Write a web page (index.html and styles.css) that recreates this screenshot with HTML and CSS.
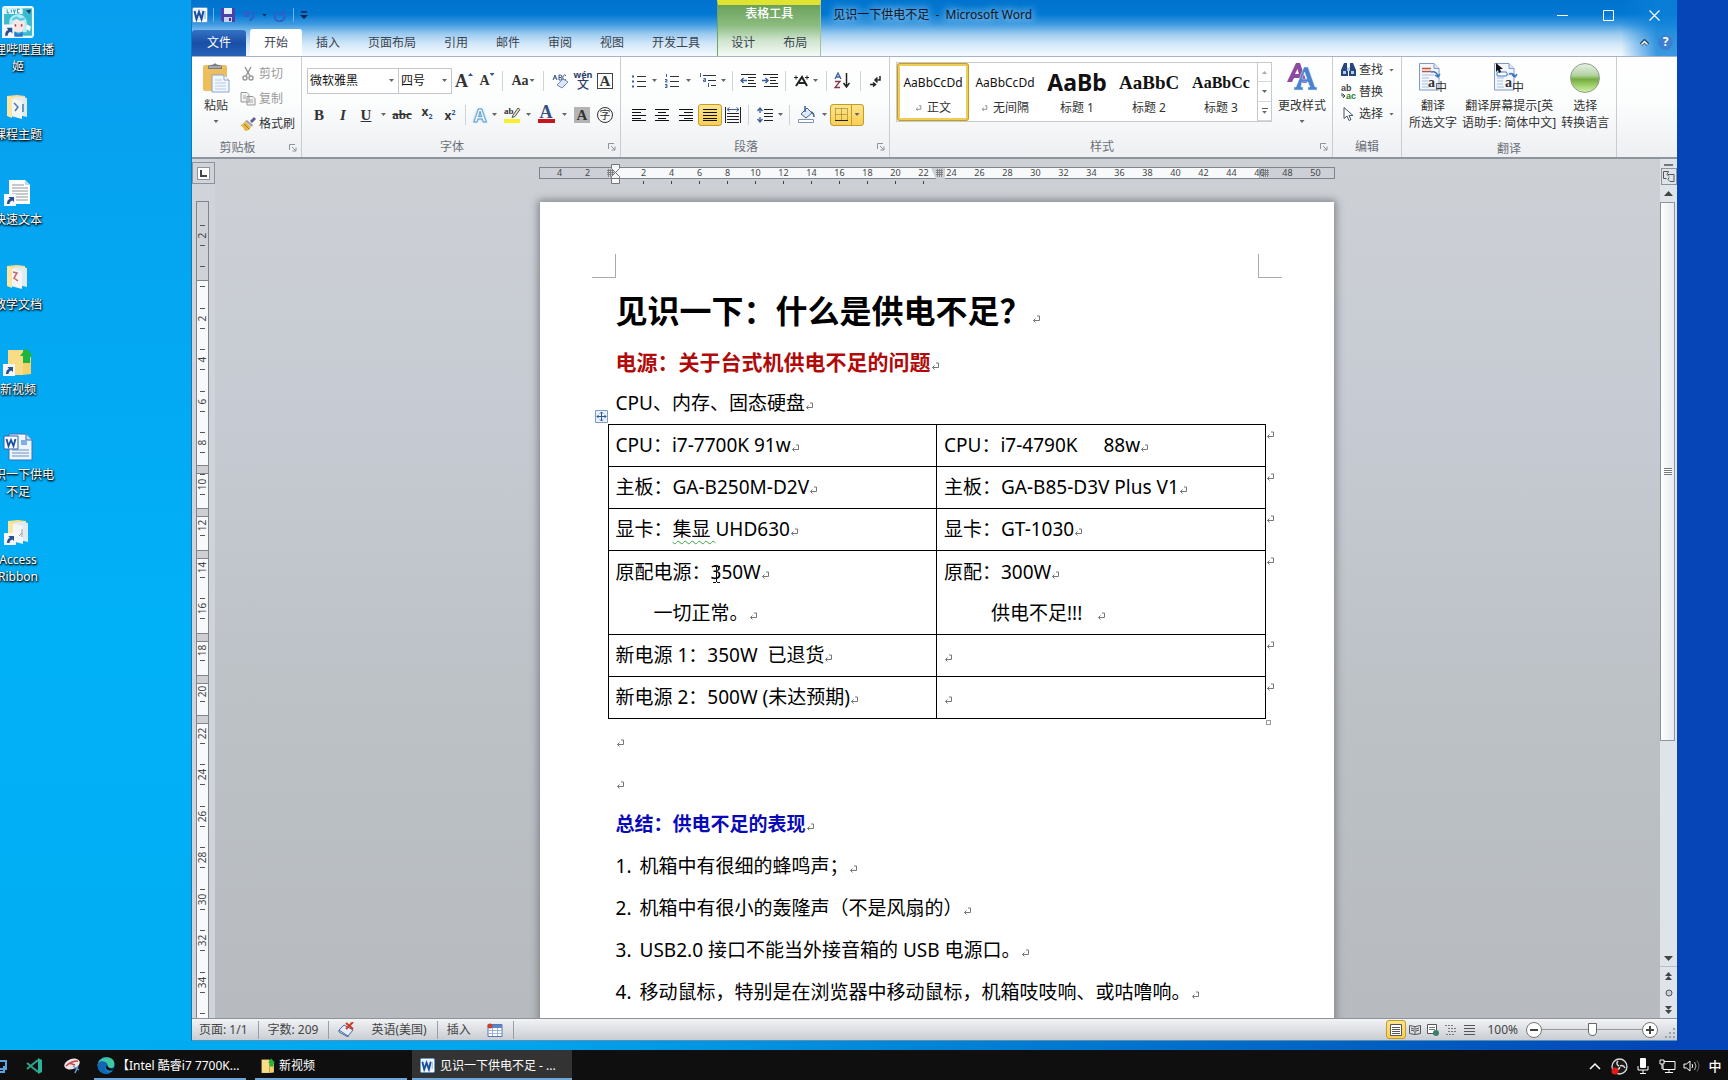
FILE: index.html
```html
<!DOCTYPE html>
<html lang="zh-CN">
<head>
<meta charset="utf-8">
<title>见识一下供电不足 - Microsoft Word</title>
<link rel="stylesheet" href="styles.css">
</head>
<body>
<svg class="defs" aria-hidden="true">
  <symbol id="mark" viewBox="0 0 9 9"><path d="M5 1h2.500v4.500H1.500M3.500 3.500l-2 2 2 2" fill="none" stroke="#777" stroke-width="1"/></symbol>
  <symbol id="shortcut" viewBox="0 0 12 12"><path d="M0 0h12v12H0z" fill="#f4f7fb"/><path d="M3 10c0-3 1-4.500 3-5L4.500 3H10v5L8.500 6.500C6.500 7 5.500 8 5.500 10z" fill="#28508f"/></symbol>
  <symbol id="folder" viewBox="0 0 24 26"><path d="M1 2l10-1 8 1v20H1z" fill="#f9dd86"/><path d="M8 3h8l5 1v19l-13-3z" fill="#dfeaf2"/><path d="M5 4l11 3v18L5 22z" fill="#f3f5f6"/><path d="M1 2l5 2v20l-5-2z" fill="#fbe6a2"/></symbol>
  <symbol id="newfolder" viewBox="0 0 28 28"><path d="M3 2h15v25H3z" fill="#f8dc86"/><path d="M18 9h8v17l-8 1z" fill="#f3cf6e"/><path d="M21 0l7 8h-3v7h-7V8h-3z" fill="#1fb53a"/></symbol>
  <symbol id="word" viewBox="0 0 16 16"><rect x=".5" y=".5" width="15" height="15" rx="1.500" fill="#fff" stroke="#5b9bd5"/><path d="M2 2h10v12H2z" fill="#e4effa"/><path d="M2.500 4l2 8 2.500-7 2.500 7 2-8" fill="none" stroke="#1b4f9c" stroke-width="2"/><path d="M13 4v8" stroke="#7ba7d8"/></symbol>
  <symbol id="trans" viewBox="0 0 28 29"><path d="M.5.5H15l5 5V27H.5z" fill="#f3f7fd" stroke="#7f9ac6"/><path d="M15 .5v5h5" fill="#dce7f6" stroke="#7f9ac6"/><path d="M3 12h12M3 15h7M3 18h6M3 21h6M3 24h7" stroke="#a9bedf"/></symbol>
  <symbol id="launch" viewBox="0 0 8 8"><path d="M.5 6V.5H6" fill="none" stroke="#8c939c"/><path d="M3 3l4 4M7 3.500V7H3.500" fill="none" stroke="#8c939c"/></symbol>
  <symbol id="gridmark" viewBox="0 0 7 8"><path d="M1.500 0v8M3.500 0v8M5.500 0v8M0 1.500h7M0 3.500h7M0 5.500h7" stroke="#777" stroke-width=".8"/></symbol>
</svg>

<main class="desktop">
  <ul class="shortcuts">
    <li><svg width="32" viewBox="2 0 31 28" preserveAspectRatio="none"><rect x="2" width="31" height="28" rx="3" fill="#e9fbfd"/><rect x="4" y="2" width="27" height="24" fill="#3bb9cf"/><path d="M4 2h18v5H4z" fill="#eafcff"/><path d="M9 14c0-8 15-10 17 0v9H10z" fill="#b3eef8"/><circle cx="18" cy="17" r="6" fill="#f7e6e2"/><path d="M15 16v2M21 16v2" stroke="#a33a55" stroke-width="1.500"/><path d="M12 12l4-2 4 2 4-1" fill="none" stroke="#58cbe3" stroke-width="2"/><path d="M14 22l4 3 4-3v5h-8z" fill="#2d75d0"/><path d="M25 4l5-1-1 4z" fill="#16486a"/><path d="M26 16l4 2-1 4-4-2z" fill="#f2fbfd"/><path d="M7 3v3h2M11 3v3M13 3l1 3 1-3M19 3h-2v3h2" fill="none" stroke="#35a0bd"/><use href="#shortcut" x="2" y="16" width="12" height="12"/></svg><span>哔哩哔哩直播姬</span></li>
    <li><svg width="24" viewBox="0 0 24 26"><use href="#folder"/><path d="M8 9l4 4-3 4M17 10v8" fill="none" stroke="#477cae" stroke-width="1.500"/></svg><span>课程主题</span></li>
    <li><svg width="30" viewBox="0 0 30 28"><path d="M6 2h16l5 5v19H6z" fill="#fff"/><path d="M22 2v5h5" fill="#b9dbe9"/><path d="M9 7h12M9 10h16M9 13h16M9 16h16M9 19h16M9 22h16" stroke="#8c9299"/><use href="#shortcut" x="1" y="16" width="12" height="12"/></svg><span>快速文本</span></li>
    <li><svg width="24" viewBox="0 0 24 26"><use href="#folder"/><path d="M7 8l4 1-3 5 4 3" fill="none" stroke="#c2697d" stroke-width="1.500"/></svg><span>教学文档</span></li>
    <li><svg width="30" viewBox="0 0 30 28"><use href="#newfolder" x="2" y="0" width="28" height="28"/><use href="#shortcut" x="0" y="16" width="12" height="12"/></svg><span>新视频</span></li>
    <li><svg width="30" viewBox="0 0 30 28"><path d="M6 1h17l6 6v20H6z" fill="#eef4fb" stroke="#3b6fb5"/><path d="M23 1v6h6" fill="#c9dcf1" stroke="#3b6fb5"/><path d="M18 7h6v5h-6z" fill="#7fb0df"/><path d="M9 17h17M9 20h17M9 23h17" stroke="#6b8fc0"/><path d="M1 3h14v13H1z" fill="#f6faff" stroke="#2f63ae"/><path d="M3.500 6l2 7L8 7l2.500 6 2-7" fill="none" stroke="#1b4f9c" stroke-width="1.800"/></svg><span>见识一下供电不足</span></li>
    <li><svg width="30" viewBox="0 0 30 26"><use href="#folder" x="4" y="0" width="24" height="26"/><path d="M19 10v8M16 17l3-3" stroke="#999"/><use href="#shortcut" x="1" y="14" width="12" height="12"/></svg><span>Access Ribbon</span></li>
  </ul>

  <section class="window">
    <header class="head">
      <div class="qat">
        <svg width="16" height="16"><use href="#word"/></svg>
        <i class="bar"></i>
        <button class="q" aria-label="保存"><svg width="14" height="14" viewBox="0 0 14 14"><path d="M0 0h14v14H2l-2-2z" fill="#4b3fa8"/><path d="M3 0h8v6H3z" fill="#e8ecfa"/><path d="M3 9h8v5H3z" fill="#c9cff0"/><path d="M8 10h2v3H8z" fill="#3b2f90"/></svg></button>
        <button class="q" aria-label="撤消"><svg width="14" height="13" viewBox="0 0 14 13"><path d="M2 2v5h5M2.500 6.500c3-5 9-4 9 0 0 3-2 4-4 5" fill="none" stroke="#2f5fc8" stroke-width="2"/></svg></button>
        <i class="dd dark"></i>
        <button class="q" aria-label="重复"><svg width="14" height="13" viewBox="0 0 14 13"><path d="M4 3a5 5 0 1 0 7 2M10 1v4.500H5.500" fill="none" stroke="#2f5fc8" stroke-width="2"/></svg></button>
        <i class="bar"></i>
        <svg width="8" height="8" viewBox="0 0 8 8"><path d="M1 1h6" stroke="#10264a" stroke-width="1.500"/><path d="M0 4h8L4 8z" fill="#10264a"/></svg>
      </div>
      <nav class="tabs">
        <button class="file">文件</button>
        <button class="tab on">开始</button><button class="tab">插入</button><button class="tab">页面布局</button><button class="tab">引用</button><button class="tab">邮件</button><button class="tab">审阅</button><button class="tab">视图</button><button class="tab">开发工具</button>
      </nav>
      <div class="context">
        <strong>表格工具</strong>
        <div><button class="tab">设计</button><button class="tab">布局</button></div>
      </div>
      <div class="titlebar">
        <h1>见识一下供电不足&nbsp; -&nbsp; Microsoft Word</h1>
        <button class="wc" aria-label="最小化"><svg width="11" height="11"><path d="M0 5.500h11" stroke="#fff"/></svg></button>
        <button class="wc" aria-label="最大化"><svg width="11" height="11"><path d="M.5.5h10v10H.5z" fill="none" stroke="#fff"/></svg></button>
        <button class="wc" aria-label="关闭"><svg width="11" height="11"><path d="M.5.5l10 10M10.500.5l-10 10" stroke="#fff" stroke-width="1.200"/></svg></button>
      </div>
      <div class="helpers">
        <button class="q" aria-label="功能区最小化"><svg width="9" height="7" viewBox="0 0 9 7"><path d="M1 5.500L4.500 2 8 5.500" fill="none" stroke="#26466e" stroke-width="3.500"/><path d="M1.500 5.500l3-3 3 3" fill="none" stroke="#fff" stroke-width="1.500"/></svg></button>
        <button class="help" aria-label="帮助">?</button>
      </div>
    </header>

    <div class="ribbon">
      <section class="group g-clip">
        <div class="body">
          <button class="big">
            <svg width="27" height="30" viewBox="0 0 27 30"><rect x="0" y="2" width="24" height="26" rx="2" fill="#eebd5c"/><path d="M5 4c0-3 5-1 7-4 2 3 7 1 7 4v2H5z" fill="#777b82"/><path d="M6 4h12" stroke="#d8dbe0"/><path d="M9 12h12l5 5v12H9z" fill="#f2f7fe" stroke="#88a3cb"/><path d="M21 12v5h5" fill="#fff" stroke="#88a3cb"/><path d="M12 17h7M12 20h11M12 23h11M12 26h11" stroke="#b7c9e4"/></svg>
            <span>粘贴</span><i class="dd"></i>
          </button>
          <div class="rows r25">
            <button class="row dim"><svg width="16" height="14" viewBox="0 0 16 14"><path d="M5 0l5 9M11 0L6 9" stroke="#999" stroke-width="1.500"/><circle cx="5" cy="11" r="2" fill="none" stroke="#999" stroke-width="1.500"/><circle cx="11" cy="11" r="2" fill="none" stroke="#999" stroke-width="1.500"/></svg>剪切</button>
            <button class="row dim"><svg width="16" height="14" viewBox="0 0 16 14"><path d="M1 .5h6l2 2V10H1zM7 4.500h6l2 2V13H7z" fill="#f2f2f2" stroke="#999"/><path d="M3 4h3M3 6h3M9 8h4M9 10h4" stroke="#aaa"/></svg>复制</button>
            <button class="row"><svg width="16" height="14" viewBox="0 0 16 14"><path d="M10 4l4-4 2 2-4 4z" fill="#6a5a8c"/><path d="M7 3l6 5-1 2-7-6z" fill="#9aa3b5"/><path d="M5 4l6 6c-1 3-4 4-6 4-1-3-3-5-5-6 2 0 4-2 5-4z" fill="#e6b84a"/><path d="M4 7l5 5" stroke="#a97c19"/></svg>格式刷</button>
          </div>
        </div>
        <footer>剪贴板<svg class="launch"><use href="#launch"/></svg></footer>
      </section>

      <section class="group g-font">
        <div class="body lines">
          <div class="line">
            <label class="combo c91"><select aria-label="字体"><option>微软雅黑</option></select><i class="dd"></i></label>
            <label class="combo c54"><select aria-label="字号"><option>四号</option></select><i class="dd"></i></label>
            <button class="ib w24"><span class="serif s17">A</span><i class="up"></i></button>
            <button class="ib w22"><span class="serif s14">A</span><i class="up down"></i></button>
            <i class="sep"></i>
            <button class="ib w32"><span class="serif s14">Aa</span><i class="dd"></i></button>
            <i class="sep"></i>
            <button class="ib w24" aria-label="清除格式"><svg width="17" height="16" viewBox="0 0 17 16"><path d="M1 7l2-5 2 5M2 5h2M7 2v5h1.500a1 1 0 0 0 0-2.500H7h1.500a1 1 0 0 0 0-2.500zM14 2.500a2 2.500 0 1 0 0 4" fill="none" stroke="#3c5582"/><path d="M5 12l6-6 5 3-6 6z" fill="#dbe7f7" stroke="#6d8cbc"/></svg></button>
            <button class="ib w22 wen"><small>wén</small><b>文</b></button>
            <button class="ib w22"><span class="boxa">A</span></button>
          </div>
          <div class="line">
            <button class="ib w24"><span class="serif s15">B</span></button>
            <button class="ib w24"><em class="serif s15">I</em></button>
            <button class="ib w22"><u class="serif s15">U</u></button><i class="dd w12"></i>
            <button class="ib w26"><s class="serif s13">abc</s></button>
            <button class="ib w24"><b>x<sub>2</sub></b></button>
            <button class="ib w22"><b>x<sup>2</sup></b></button>
            <i class="sep"></i>
            <button class="ib w20"><span class="glow">A</span></button><i class="dd w10"></i>
            <button class="ib w24" aria-label="突出显示"><svg width="17" height="17" viewBox="0 0 17 17"><path d="M0 13h16v4H0z" fill="#f4f02a"/><path d="M9 9l5-7 2 1.500-5 7-3 1z" fill="#f2d98a" stroke="#4d5b7b"/><text x="0" y="8" class="abt">ab</text></svg></button><i class="dd w10"></i>
            <button class="ib w24"><span class="serif s17 red">A</span></button><i class="dd w12"></i>
            <button class="ib w24"><span class="shade">A</span></button>
            <button class="ib w22"><span class="circ">字</span></button>
          </div>
        </div>
        <footer>字体<svg class="launch"><use href="#launch"/></svg></footer>
      </section>

      <section class="group g-para">
        <div class="body lines">
          <div class="line">
            <button class="ib w22" aria-label="项目符号"><svg width="14" height="14"><path d="M5 2.500h9M5 7.500h9M5 12.500h9" stroke="#333"/><path d="M0 1.500h2v2H0zM0 6.500h2v2H0zM0 11.500h2v2H0z" fill="#3c5f9e"/></svg></button><i class="dd w10"></i>
            <button class="ib w24" aria-label="编号"><svg width="14" height="14"><path d="M5 2.500h9M5 7.500h9M5 12.500h9" stroke="#333"/><path d="M1.500 0v3M0 5.500h2v1.500H.5v1h2M0 10.500h2v3H0M.5 12h1.500" fill="none" stroke="#3c5f9e"/></svg></button><i class="dd w10"></i>
            <button class="ib w26" aria-label="多级列表"><svg width="17" height="15"><path d="M4 2.500h13M9 7.500h8M12 12.500h5" stroke="#333"/><path d="M1.500 0v4M4.500 5.500h2v3h-2v-1.500h2M9.500 10v4" fill="none" stroke="#3c5f9e"/></svg></button><i class="dd w8"></i>
            <i class="sep"></i>
            <button class="ib w22" aria-label="减少缩进"><svg width="16" height="13"><path d="M1 .5h15M8 3.500h8M8 6.500h6M8 9.500h8M2 12.500h14" stroke="#222"/><path d="M7 6.500H1M3.500 4L1 6.500 3.500 9" fill="none" stroke="#3c5f9e" stroke-width="1.500"/></svg></button>
            <button class="ib w22" aria-label="增加缩进"><svg width="16" height="13"><path d="M1 .5h15M8 3.500h8M8 6.500h6M8 9.500h8M2 12.500h14" stroke="#222"/><path d="M0 6.500h6M3.500 4L6 6.500 3.500 9" fill="none" stroke="#3c5f9e" stroke-width="1.500"/></svg></button>
            <i class="sep"></i>
            <button class="ib w22" aria-label="中文版式"><svg width="17" height="13"><path d="M3 12l6-9 5 9M6 9h6" fill="none" stroke="#222" stroke-width="2"/><path d="M1 3.500h4M3 1.500v4M12 3.500h4M14 1.500v4" stroke="#222"/></svg></button><i class="dd w8"></i>
            <i class="sep tight"></i>
            <button class="ib w24" aria-label="排序"><svg width="16" height="17"><path d="M1 7l3-6 3 6M2 5h4" fill="none" stroke="#3c5f9e" stroke-width="1.300"/><path d="M1 9.500h5L1 15.500h5" fill="none" stroke="#8b3348" stroke-width="1.300"/><path d="M12.500 1v13M9.500 11l3 4 3-4" fill="none" stroke="#222" stroke-width="1.500"/></svg></button>
            <i class="sep tight"></i>
            <button class="ib w24" aria-label="显示编辑标记"><svg width="12" height="12"><path d="M10 1v4H5M7.500 2.500L5 5l2.500 2.500M0 9.500h5M3 7.500l2.500 2-2.500 2" fill="none" stroke="#222" stroke-width="1.500"/></svg></button>
          </div>
          <div class="line">
            <button class="ib w22" aria-label="左对齐"><svg width="14" height="12"><path d="M0 .5h14M0 3.500h9M0 6.500h14M0 9.500h9M0 11.500h14" stroke="#111"/></svg></button>
            <button class="ib w24" aria-label="居中"><svg width="14" height="12"><path d="M0 .5h14M3 3.500h8M0 6.500h14M3 9.500h8M0 11.500h14" stroke="#111"/></svg></button>
            <button class="ib w24" aria-label="右对齐"><svg width="14" height="12"><path d="M0 .5h14M5 3.500h9M0 6.500h14M5 9.500h9M0 11.500h14" stroke="#111"/></svg></button>
            <button class="ib w24 hot" aria-label="两端对齐"><svg width="14" height="12"><path d="M0 .5h14M0 3.500h14M0 6.500h14M0 9.500h14M0 11.500h14" stroke="#111"/></svg></button>
            <button class="ib w22" aria-label="分散对齐"><svg width="16" height="16"><path d="M.5 0v16M15.500 0v16" stroke="#222"/><path d="M2 2.500h12M4.500.5L2 2.500l2.500 2M11.500.5l2.500 2-2.500 2" fill="none" stroke="#3c5f9e"/><path d="M2 6.500h12M2 9.500h12M2 12.500h12M2 15.500h12" stroke="#222"/></svg></button>
            <i class="sep"></i>
            <button class="ib w24" aria-label="行距"><svg width="16" height="16"><path d="M7 2.500h9M7 6.500h9M7 9.500h9M7 13.500h9" stroke="#222"/><path d="M3 1v5M.5 4L3 1l2.500 3M3 15v-5M.5 12L3 15l2.500-3" fill="none" stroke="#3c5f9e" stroke-width="1.300"/></svg></button><i class="dd w8"></i>
            <i class="sep"></i>
            <button class="ib w26" aria-label="底纹"><svg width="18" height="17"><path d="M3 8l6-6 5 5-6 5z" fill="#dfe9f7" stroke="#45608f"/><path d="M7 0v6M13 6c3 1 3 3 3 5" fill="none" stroke="#3c5f9e" stroke-width="1.500"/><path d="M.5 13.500h15v3H.5z" fill="#fff" stroke="#7d93b8"/></svg></button><i class="dd w10"></i>
            <button class="ib w34 hot" aria-label="边框"><svg width="13" height="13"><path d="M.5.5h12v12M.5.5v12M6.500.5v12M.5 6.500h12" fill="none" stroke="#8a6a1a" stroke-dasharray="1 1"/><path d="M0 12.500h13" stroke="#222"/></svg><i class="split"></i><i class="dd"></i></button>
          </div>
        </div>
        <footer>段落<svg class="launch"><use href="#launch"/></svg></footer>
      </section>

      <section class="group g-style">
        <div class="body">
          <div class="gallery">
            <button class="style sel"><span class="pv">AaBbCcDd</span><span><svg width="8" height="8"><use href="#mark"/></svg> 正文</span></button>
            <button class="style"><span class="pv">AaBbCcDd</span><span><svg width="8" height="8"><use href="#mark"/></svg> 无间隔</span></button>
            <button class="style"><span class="pv h1p">AaBb</span><span>标题 1</span></button>
            <button class="style"><span class="pv h2p">AaBbC</span><span>标题 2</span></button>
            <button class="style"><span class="pv h3p">AaBbCc</span><span>标题 3</span></button>
            <div class="spin"><button disabled aria-label="上一行"><i class="dd flip"></i></button><button aria-label="下一行"><i class="dd"></i></button><button class="more" aria-label="其他"><i class="dd"></i></button></div>
          </div>
          <button class="big wide">
            <svg width="30" height="30" viewBox="0 0 30 30"><path d="M9 0h4l7 20h-5l-2-5H7l-2 4H0zM8 11h4L10.500 6z" fill="#8d4a9f"/><path d="M17 4h4l7 20h2v3h-9v-3h2l-2-5h-6l-1 5h2v3H7v-3h2zM15 16h5l-2.500-7z" fill="#4c83d0" stroke="#e6effb" stroke-width=".5"/></svg>
            <span>更改样式</span><i class="dd"></i>
          </button>
        </div>
        <footer>样式<svg class="launch"><use href="#launch"/></svg></footer>
      </section>

      <section class="group g-edit">
        <div class="body">
          <div class="rows r22">
            <button class="row"><svg width="15" height="14" viewBox="0 0 15 14"><path d="M3 0h3v4l1 2v7H0V7zM9 0h3l3 7v6H8V6l1-2z" fill="#27487f"/><path d="M2 8h3v3H2zM10 8h3v3h-3zM6 5h3v3H6z" fill="#b7cbe8"/></svg>查找<i class="dd"></i></button>
            <button class="row"><svg width="15" height="17" viewBox="0 0 15 17"><text x="0" y="7" class="rt1">ab</text><text x="5" y="15" class="rt2">ac</text><path d="M1 9v3h3M2 10l2 2-2 2" fill="none" stroke="#355" /></svg>替换</button>
            <button class="row"><svg width="15" height="14" viewBox="0 0 15 14"><path d="M3 .5v11l3-2.500 2 4.500 2-1-2-4h4z" fill="#fff" stroke="#456"/></svg>选择<i class="dd"></i></button>
          </div>
        </div>
        <footer>编辑</footer>
      </section>

      <section class="group g-trans">
        <div class="body">
          <button class="big"><span class="ticon"><svg width="28" height="29"><use href="#trans"/><path d="M3 5.500h9M3 8.500h9" stroke="#c05a3a" stroke-width="1.500"/><path d="M12 9c4-1 6 1 7 4M16 12l3 2 2-3" fill="none" stroke="#3b74c4" stroke-width="1.500"/><text x="9" y="24" class="ta">a</text><text x="16" y="29" class="tz">中</text></svg></span><span>翻译<br>所选文字</span></button>
          <button class="big"><span class="ticon"><svg width="31" height="29"><use href="#trans" width="28" height="29"/><rect x="3" y="9" width="10" height="4" rx="1" fill="#fff" stroke="#3b74c4"/><path d="M15 11c3-1 5 0 6 3M18 12l3 2 2-3" fill="none" stroke="#3b74c4" stroke-width="1.500"/><text x="11" y="24" class="ta">a</text><text x="18" y="29" class="tz">中</text></svg><svg class="pointer" width="7" height="10" viewBox="0 0 7 10"><path d="M0 0v9l2-2 1 3 2-1-1-3h3z" fill="#111"/></svg></span><span>翻译屏幕提示[英<br>语助手: 简体中文]</span></button>
          <button class="big"><span class="ticon"><i class="ball"></i></span><span>选择<br>转换语言</span></button>
        </div>
        <footer>翻译</footer>
      </section>
    </div>

    <div class="work">
      <div class="left">
        <div class="tabsel"><i></i></div>
        <div class="vruler">
          <span>2</span><span></span><span>2</span><span>4</span><span>6</span><span>8</span><span>10</span><span>12</span><span>14</span><span>16</span><span>18</span><span>20</span><span>22</span><span>24</span><span>26</span><span>28</span><span>30</span><span>32</span><span>34</span><span></span>
          <i class="band b1"></i><i class="band b2"></i><i class="band b3"></i><i class="band b4"></i><i class="band b5"></i><i class="band b6"></i>
        </div>
      </div>

      <div class="canvas">
        <div class="hruler">
          <span>4</span><span>2</span><span></span><span class="t">2</span><span class="t">4</span><span class="t">6</span><span class="t">8</span><span class="t">10</span><span class="t">12</span><span class="t">14</span><span class="t">16</span><span class="t">18</span><span class="t">20</span><span class="t">22</span><span>24</span><span>26</span><span>28</span><span>30</span><span>32</span><span>34</span><span>36</span><span>38</span><span>40</span><span>42</span><span>44</span><span>46</span><span>48</span><span>50</span>
          <svg class="gm m1" width="7" height="8"><use href="#gridmark"/></svg>
          <svg class="gm m2" width="14" height="11"><path d="M0 0h14v11H5z" fill="#cdd0d4"/><use href="#gridmark" x="5" y="1" width="7" height="8"/></svg>
          <svg class="gm m3" width="7" height="8"><use href="#gridmark"/></svg>
          <svg class="indent" width="10" height="21" viewBox="0 0 10 21"><path d="M.5.5h8v4l-4 4-4-4zM4.500 8.500l4 4v2h-8v-2zM.5 14.500h8v5h-8z" fill="#f4f6f8" stroke="#777"/></svg>
        </div>

        <article class="page">
          <i class="crop cl"></i><i class="crop cr"></i>
          <h2 class="title">见识一下：什么是供电不足？<svg class="pm"><use href="#mark"/></svg></h2>
          <h3 class="sub">电源：关于台式机供电不足的问题<svg class="pm"><use href="#mark"/></svg></h3>
          <p>CPU、内存、固态硬盘<svg class="pm"><use href="#mark"/></svg></p>
          <div class="tablebox">
            <svg class="handle" width="13" height="13"><path d="M.5.5h12v12H.5z" fill="#e8f0fa" stroke="#7f9cc4"/><path d="M6.500 2v9M2 6.500h9M5 3.500l1.500-1.500L8 3.500M5 9.500L6.500 11 8 9.500M3.500 5L2 6.500 3.500 8M9.500 5L11 6.500 9.500 8" fill="none" stroke="#2f5597"/></svg>
            <table>
              <tr><td>CPU：i7-7700K 91w<svg class="pm"><use href="#mark"/></svg></td><td>CPU：i7-4790K <span class="gap"></span>88w<svg class="pm"><use href="#mark"/></svg></td><td class="end"><svg class="pm"><use href="#mark"/></svg></td></tr>
              <tr><td>主板：GA-B250M-D2V<svg class="pm"><use href="#mark"/></svg></td><td>主板：GA-B85-D3V Plus V1<svg class="pm"><use href="#mark"/></svg></td><td class="end"><svg class="pm"><use href="#mark"/></svg></td></tr>
              <tr><td>显卡：<span class="wavy">集显 </span>UHD630<svg class="pm"><use href="#mark"/></svg></td><td>显卡：GT-1030<svg class="pm"><use href="#mark"/></svg></td><td class="end"><svg class="pm"><use href="#mark"/></svg></td></tr>
              <tr class="tall"><td>原配电源：<span class="caret">350W<svg width="7" height="17"><path d="M0 .5h3M4 .5h3M0 16.500h3M4 16.500h3M3.500 1v15" stroke="#111"/></svg></span><svg class="pm"><use href="#mark"/></svg><br><span class="in2">一切正常。</span><svg class="pm"><use href="#mark"/></svg></td><td>原配：300W<svg class="pm"><use href="#mark"/></svg><br><span class="in3">供电不足!!!</span>&nbsp; &nbsp;<svg class="pm"><use href="#mark"/></svg></td><td class="end"><svg class="pm"><use href="#mark"/></svg></td></tr>
              <tr><td>新电源 1：350W&nbsp; 已退货<svg class="pm"><use href="#mark"/></svg></td><td><svg class="pm"><use href="#mark"/></svg></td><td class="end"><svg class="pm"><use href="#mark"/></svg></td></tr>
              <tr><td>新电源 2：500W (未达预期)<svg class="pm"><use href="#mark"/></svg></td><td><svg class="pm"><use href="#mark"/></svg></td><td class="end"><svg class="pm"><use href="#mark"/></svg></td></tr>
            </table>
            <i class="corner"></i>
          </div>
          <p><svg class="pm"><use href="#mark"/></svg></p>
          <p><svg class="pm"><use href="#mark"/></svg></p>
          <h3 class="sum">总结：供电不足的表现<svg class="pm"><use href="#mark"/></svg></h3>
          <ol>
            <li>机箱中有很细的蜂鸣声；<svg class="pm"><use href="#mark"/></svg></li>
            <li>机箱中有很小的轰隆声（不是风扇的）<svg class="pm"><use href="#mark"/></svg></li>
            <li>USB2.0 接口不能当外接音箱的 USB 电源口。<svg class="pm"><use href="#mark"/></svg></li>
            <li>移动鼠标，特别是在浏览器中移动鼠标，机箱吱吱响、或咕噜响。<svg class="pm"><use href="#mark"/></svg></li>
          </ol>
        </article>
      </div>

      <div class="scroll">
        <i class="splitter"></i>
        <button class="rt" aria-label="标尺"><svg width="12" height="11"><path d="M.5.5h5l-1.500 3 2 2M5 3.500h6v7H7l-2-2 1-2M.5.5v7h3" fill="none" stroke="#555"/></svg></button>
        <button class="sa" aria-label="向上滚动"><i class="tri"></i></button>
        <div class="track"><div class="thumb"><i></i></div></div>
        <button class="sa" aria-label="向下滚动"><i class="tri dn"></i></button>
        <button class="nav" aria-label="前一页"><svg width="7" height="8"><path d="M0 4l3.500-4L7 4zM0 8l3.500-4L7 8z" fill="#444"/></svg></button>
        <button class="nav" aria-label="选择浏览对象"><svg width="8" height="8"><circle cx="4" cy="4" r="3" fill="#ccd" stroke="#555"/></svg></button>
        <button class="nav" aria-label="下一页"><svg width="7" height="8"><path d="M0 0l3.500 4L7 0zM0 4l3.500 4L7 4z" fill="#444"/></svg></button>
      </div>
    </div>

    <footer class="status">
      <span class="st">页面: 1/1</span><span class="st">字数: 209</span>
      <span class="st proof"><svg width="17" height="15"><path d="M1 8l5-5 9 5-5 6z" fill="#e6eefb" stroke="#47699e"/><path d="M1 8v2l9 5v-1" fill="none" stroke="#47699e"/><path d="M8 1l7 6M15 0L8 7" stroke="#cf3a22" stroke-width="2"/></svg>英语(美国)</span>
      <span class="st macro">插入<svg width="16" height="14"><path d="M1 1.500h14v12H1z" fill="#fff" stroke="#5b78ab"/><path d="M1 2h14v3H1z" fill="#5b87cc"/><path d="M1 7.500h14M1 10.500h14M5.500 5v8M10.500 5v8" stroke="#9bb3d9"/><circle cx="3" cy="3" r="2.500" fill="#c8402e"/></svg></span>
      <div class="views">
        <button class="v hot" aria-label="页面视图"><svg width="12" height="12"><path d="M.5.5h11v11H.5z" fill="#fff" stroke="#555"/><path d="M2 3.500h8M2 5.500h8M2 7.500h8M2 9.500h8" stroke="#555"/></svg></button>
        <button class="v" aria-label="阅读版式视图"><svg width="12" height="12"><path d="M.5 1.500l5 1 1 0 5-1v8l-5 1-1 0-5-1zM6 2v9M2 4l3 1M2 6l3 1M7 5l3-1M7 7l3-1" fill="none" stroke="#555"/></svg></button>
        <button class="v" aria-label="Web 版式视图"><svg width="12" height="12"><path d="M.5.5h9v9h-9z" fill="#fff" stroke="#555"/><path d="M2 3.500h6M2 5.500h6" stroke="#777"/><circle cx="9" cy="9" r="3" fill="#3a8068"/></svg></button>
        <button class="v" aria-label="大纲视图"><svg width="12" height="10"><path d="M0 .5h8M3 3.500h8M3 6.500h8M1 9.500h9" stroke="#777" stroke-dasharray="2 1"/></svg></button>
        <button class="v" aria-label="草稿"><svg width="11" height="10"><path d="M0 .5h11M0 3.500h11M0 6.500h11M0 9.500h11" stroke="#555"/></svg></button>
        <span class="pct">100%</span>
        <button class="round" aria-label="缩小"><svg width="8" height="8"><path d="M0 4h8" stroke="#444" stroke-width="2"/></svg></button>
        <input type="range" min="0" max="100" value="50" aria-label="缩放">
        <button class="round" aria-label="放大"><svg width="8" height="8"><path d="M0 4h8M4 0v8" stroke="#444" stroke-width="2"/></svg></button>
        <svg class="grip" width="12" height="12"><path d="M9 9h2v2H9zM5 9h2v2H5zM1 9h2v2H1zM9 5h2v2H9zM5 5h2v2H5zM9 1h2v2H9z" fill="#9aa2ad"/></svg>
      </div>
    </footer>
  </section>
</main>

<nav class="taskbar">
  <button class="pin first" aria-label="任务视图"><svg width="12" height="16"><path d="M2 3h8v8H2M8 8v6H2" fill="none" stroke="#58a6dd" stroke-width="2"/></svg></button>
  <button class="pin" aria-label="Visual Studio Code"><svg width="17" height="16" viewBox="0 0 17 16"><path d="M12 0l4 2v12l-4 2z" fill="#2bb39a"/><path d="M12 2L1 11M1 5l11 9" stroke="#2da28d" stroke-width="2"/></svg></button>
  <button class="pin" aria-label="截图工具"><svg width="17" height="16" viewBox="0 0 17 16"><ellipse cx="8" cy="6" rx="8" ry="5" fill="#f0e4e4" transform="rotate(-20 8 6)"/><path d="M2 8c3-3 7-5 12-5M5 5l6 2" fill="none" stroke="#c2474a" stroke-width="1.500"/><path d="M9 8l6 4M14 8l-3 7" stroke="#5f9fd6" stroke-width="1.500"/></svg></button>
  <button class="task browser"><svg width="18" height="17" viewBox="0 0 18 17"><circle cx="9" cy="8.500" r="8.500" fill="#1683d1"/><path d="M1 6C4-1 17-2 17.500 7c0 4-5 5-7 3 1-2 0-5-3-5-4 0-6 3-7 4z" fill="#3fc9a0"/><path d="M1 6c3-3 9-2 9 2-3 2-2 7 3 8-8 3-13-3-12-10z" fill="#1565b5"/><path d="M10 8c-3 3 1 7 6 5 1-1 1.500-2 1-2-3 1-6 0-7-3z" fill="#0f0f0f"/></svg><span>【Intel 酷睿i7 7700K...</span></button>
  <button class="task"><svg width="15" height="16"><use href="#newfolder"/></svg><span>新视频</span></button>
  <button class="task active"><svg width="15" height="15"><use href="#word"/></svg><span>见识一下供电不足 - ...</span></button>
  <div class="tray">
    <button aria-label="显示隐藏的图标"><svg width="12" height="8"><path d="M1 7l5-5 5 5" fill="none" stroke="#fff" stroke-width="1.500"/></svg></button>
    <button aria-label="OBS"><svg width="17" height="17"><circle cx="8.500" cy="8.500" r="7.500" fill="#191919" stroke="#ddd" stroke-width="1.300"/><path d="M8 8c-2-1-3-3-1-5M9 8c2-1 4 0 5 2M8.500 9c0 2-2 3-4 3" fill="none" stroke="#ddd" stroke-width="1.500"/><circle cx="4" cy="13" r="3.500" fill="#e01b1b"/></svg></button>
    <button aria-label="麦克风"><svg width="12" height="16"><rect x="3" y="0" width="6" height="10" rx="1" fill="#fff"/><path d="M1 8v4h10V8M6 12v3M3 15.500h6" fill="none" stroke="#fff"/></svg></button>
    <button aria-label="网络"><svg width="17" height="14"><path d="M5 2.500h11v8H4V6M10 10.500v3M6 13.500h8" fill="none" stroke="#fff"/><path d="M1 1h4v4H1zM3 5v5" fill="none" stroke="#fff"/></svg></button>
    <button aria-label="音量"><svg width="17" height="14"><path d="M1 5h2.500L7 2v10L3.500 9H1z" fill="none" stroke="#fff"/><path d="M9 5q1.500 2 0 4" fill="none" stroke="#fff"/><path d="M11.500 3q3 4 0 8" fill="none" stroke="#bbb"/><path d="M14 1.500q4 5.500 0 11" fill="none" stroke="#666"/></svg></button>
    <button class="ime">中</button>
  </div>
</nav>
</body>
</html>
```
FILE: styles.css
```css
* { box-sizing: border-box; }

html, body { height: 100%; }

body {
  margin: 0;
  display: grid;
  grid-template-rows: minmax(0, 1fr) 30px;
  overflow: hidden;
  background: #0545b7;
  color: #333;
  font: 12px/16px "Noto Sans", "Noto Sans CJK SC", sans-serif;
}

button {
  margin: 0;
  padding: 0;
  border: 0;
  background: none;
  color: inherit;
  font: inherit;
}

svg { display: block; flex: none; }
.defs { position: absolute; width: 0; height: 0; }

/* Desktop */
.desktop {
  display: grid;
  grid-template-columns: 191px minmax(0, 1fr);
  padding: 0 51px 9px 0;
  min-height: 0;
  background: linear-gradient(to right, #01aef1 0, #02a5ec 30%, #0066c4 75%, #0545b7 97%);
}

.shortcuts {
  margin: 0;
  padding: 6px 0 0;
  list-style: none;
  overflow: hidden;
  background: linear-gradient(#089eef, #03a9f2 35%, #01b1f8 60%, #01adf3);
}

.shortcuts li {
  display: flex;
  flex-direction: column;
  align-items: center;
  width: 78px;
  height: 85px;
  margin-left: -21px;
  color: #fff;
  text-align: center;
  line-height: 17px;
  text-shadow: 1px 1px 2px #000, 0 1px 2px #000;
}

.shortcuts svg { margin-bottom: 3px; height: 32px; }
.shortcuts span { width: 74px; }

/* Window */
.window {
  display: flex;
  flex-direction: column;
  min-height: 0;
  border-left: 1px solid #1377b8;
  background: #cdd0d5;
}

.head {
  display: grid;
  grid-template-columns: auto auto 1fr;
  grid-template-rows: 28px 28px;
  background:
    linear-gradient(to right, #0078d700 calc(100% - 56px), #0a80d8cc calc(100% - 20px)),
    linear-gradient(#0173cf 0, #0177d2 14px, #3c99e0 24px, #9ccbf0 34px, #d3e8f9 44px, #f5faff 56px);
}

.qat {
  display: flex;
  align-items: center;
  gap: 5px;
  padding-top: 2px;
}

.bar { width: 2px; height: 14px; border-left: 1px solid #6fb4ee; }
.q { display: flex; justify-content: center; width: 16px; }

.dd {
  flex: none;
  width: 5px;
  height: 3px;
  background: #666;
  clip-path: polygon(0 0, 100% 0, 50% 100%);
}
.dd.dark { background: #10264a; }
.dd.flip { transform: scaleY(-1); background: #aaa; }
.dd.w8 { margin: 0 2px 0 1px; }
.dd.w10 { margin: 0 3px 0 2px; }
.dd.w12 { margin: 0 3px 0 4px; }

.tabs { grid-row: 2; grid-column: 1; display: flex; align-items: end; }

.file {
  width: 54px;
  height: 26px;
  margin-right: 4px;
  border-radius: 3px 3px 0 0;
  background: linear-gradient(#3472c5, #1a4ea6 50%, #2563b8);
  color: #fff;
}

.tab { height: 27px; padding: 0 14px; color: #3b4350; }
.tab.on { background: #fff; border-radius: 3px 3px 0 0; }

.context {
  grid-row: 1 / 3;
  grid-column: 2;
  display: flex;
  flex-direction: column;
  justify-content: space-between;
  margin-left: 3px;
  border-top: 5px solid #dfe431;
  border-left: 1px solid #6fa65c;
  border-right: 1px solid #9cc592;
  background: linear-gradient(#6ba15c, #8cbc80 40%, #d0e5cf 70%, #f5faf6);
  text-align: center;
}
.context strong { padding-top: 1px; color: #fff; font-weight: 500; }
.context div { display: flex; }
.context .tab { padding: 0 13px; }
.context .tab + .tab { padding-left: 15px; }

.titlebar { display: flex; align-items: center; grid-column: 3; grid-row: 1; padding: 2px 0 0 12px; }
.titlebar h1 {
  flex: 1;
  margin: 0;
  color: #0b1626;
  font-size: 12px;
  font-weight: 400;
  text-shadow: 0 0 8px #b9dcf8, 0 0 8px #b9dcf8;
}
.wc { display: flex; justify-content: center; width: 46px; }

.helpers {
  grid-column: 3;
  grid-row: 2;
  display: flex;
  justify-content: end;
  align-items: center;
  gap: 6px;
  padding-right: 4px;
}
.help {
  width: 15px;
  height: 15px;
  border-radius: 50%;
  background: #3c7fd0;
  color: #fff;
  font-weight: 700;
  line-height: 14px;
}

/* Ribbon */
.ribbon {
  display: flex;
  height: 103px;
  border-top: 1px solid #a5b4c6;
  border-bottom: 2px solid #8f949b;
  background: linear-gradient(#fff, #fcfdfd 45%, #edeff2);
}

.group {
  display: flex;
  flex: none;
  flex-direction: column;
  border-right: 1px solid #c9ccd1;
}
.g-clip { width: 110px; }
.g-font { width: 319px; }
.g-para { width: 269px; }
.g-style { width: 443px; }
.g-edit { width: 69px; }
.g-trans { width: 215px; }

.body { display: flex; flex: 1; }
.group > footer {
  position: relative;
  height: 22px;
  padding-right: 18px;
  color: #6b7078;
  text-align: center;
  line-height: 24px;
}
.g-edit > footer, .g-trans > footer { padding-right: 0; }
.launch { position: absolute; right: 4px; bottom: 6px; width: 8px; height: 8px; }

.big {
  display: flex;
  flex-direction: column;
  align-items: center;
  width: 48px;
  padding-top: 6px;
  line-height: 17px;
  white-space: nowrap;
}
.big > span:not(.ticon) { margin: 4px 0 6px; }
.big.wide { width: 62px; }

.rows { display: flex; flex-direction: column; }
.r25 { padding-top: 4px; }
.r25 .row { height: 25px; }
.r22 { padding: 2px 0 0 8px; }
.r22 .row { height: 22px; }
.row { display: flex; align-items: center; gap: 3px; white-space: nowrap; }
.row .dd { margin-left: 3px; }
.dim { color: #9a9a9a; }

.lines { flex-direction: column; padding: 11px 0 0 5px; gap: 9px; }
.line { display: flex; align-items: center; height: 25px; }
.g-para .lines { padding-left: 7px; }

.combo { position: relative; display: flex; align-items: center; }
.c91 { width: 92px; }
.c54 { width: 54px; margin-left: -1px; }
.combo select {
  width: 100%;
  height: 26px;
  padding: 0 0 0 2px;
  appearance: none;
  border: 1px solid #c3c6cb;
  border-radius: 0;
  background: #fff;
  color: #111;
  font: inherit;
}
.combo .dd { position: absolute; right: 5px; }

.ib { display: flex; align-items: center; justify-content: center; height: 24px; flex: none; color: #333; }
.w20 { width: 20px; }
.w22 { width: 22px; }
.w24 { width: 24px; }
.w26 { width: 26px; }
.w32 { width: 32px; gap: 1px; }
.w34 { width: 34px; gap: 3px; }

.sep { width: 1px; height: 20px; margin: 0 4px; background: #cfd2d6; flex: none; }
.sep.tight { margin: 0 3px 0 6px; }

.serif { font-family: "Liberation Serif", serif; font-weight: 700; }
.s13 { font-size: 13px; }
.s14 { font-size: 14px; }
.s15 { font-size: 15px; }
.s17 { font-size: 18px; }
.up { width: 5px; height: 3px; margin-bottom: 12px; background: #2f5597; clip-path: polygon(50% 0, 100% 100%, 0 100%); }
.down { transform: scaleY(-1); }
.ib sub, .ib sup { color: #2f5597; font-size: 7px; }
.wen { flex-direction: column; color: #2c3e66; line-height: 12px; }
.wen small { font-size: 9px; font-weight: 700; line-height: 8px; }
.wen b { font-size: 12px; font-weight: 500; }
.boxa, .shade {
  width: 16px;
  height: 16px;
  border: 1px solid #444;
  font: 700 15px/14px "Liberation Serif", serif;
}
.shade { background: #b4b4b4; border-color: #b4b4b4; }
.glow { color: #fff; font: 700 18px/20px "Noto Sans", sans-serif; -webkit-text-stroke: 1px #5f9fd0; text-shadow: 0 0 3px #8fc4ea; }
.red { height: 17px; padding: 0 2px; border-bottom: 4px solid #c8141e; color: #35507f; line-height: 13px; }
.circ { width: 16px; height: 16px; border: 1px solid #333; border-radius: 50%; font-size: 11px; line-height: 14px; }
.abt { font: 700 9px "Liberation Serif", serif; fill: #333; }
.rt1 { font: 700 9px "Liberation Sans", sans-serif; fill: #444; }
.rt2 { font: 700 9px "Liberation Sans", sans-serif; fill: #2d7d32; }

.hot {
  border: 1px solid #c29b29;
  border-radius: 3px;
  background: linear-gradient(#fce48b, #f9cf55);
}
.ib.hot { height: 22px; }
.split { width: 1px; height: 20px; background: #c29b29; }

.gallery {
  display: flex;
  height: 60px;
  margin: 5px 0 0 6px;
  border: 1px solid #c6c9ce;
  background: #fff;
}
.style {
  display: flex;
  flex-direction: column;
  justify-content: space-between;
  align-items: center;
  width: 72px;
  padding: 8px 4px 5px;
}
.style.sel { padding: 5px 1px 2px; border: 3px solid #f1cd57; border-radius: 3px; outline: 1px solid #c29b29; outline-offset: -1px; }
.style span:last-child { display: flex; align-items: center; gap: 3px; }
.style svg { width: 7px; height: 7px; margin-right: 2px; }
.pv { max-width: 60px; height: 24px; overflow: hidden; color: #111; line-height: 24px; white-space: nowrap; }
.h1p { margin-top: -1px; font-size: 23px; font-weight: 700; }
.h2p { font: 700 19px/24px "Liberation Serif", serif; }
.h3p { font: 700 16px/24px "Liberation Serif", serif; }
.spin { display: grid; grid-template-rows: 1fr 1fr 1fr; width: 14px; border-left: 1px solid #c6c9ce; }
.spin button { display: flex; flex-direction: column; align-items: center; justify-content: center; gap: 2px; border-bottom: 1px solid #d3d6da; }
.spin .more::before { content: ""; width: 6px; height: 1px; background: #555; }

.g-trans .body { padding-left: 7px; gap: 5px; }
.g-trans .big { width: auto; min-width: 48px; }
.ticon { position: relative; height: 30px; }
.pointer { position: absolute; left: 2px; top: 0; }
.ta { font: 700 14px "Liberation Serif", serif; fill: #333; }
.tz { font: 12px "Noto Sans CJK SC", sans-serif; fill: #333; }
.ball {
  display: block;
  width: 30px;
  height: 30px;
  border: 1px solid #8f9f88;
  border-radius: 50%;
  background: linear-gradient(#e6efe3, #b5d3a3 40%, #74ac3f 55%, #a8d676 80%, #d2efa6);
}

/* Work area */
.work {
  display: flex;
  flex: 1;
  min-height: 0;
  background: linear-gradient(#cdd1d6, #c6cad2 30%, #bcc1c6 65%, #b7bbbf);
}

.left { width: 23px; flex: none; display: flex; flex-direction: column; background: #d0d4da; overflow: hidden; }
.tabsel {
  flex: none;
  display: grid;
  place-items: center;
  width: 23px;
  height: 22px;
  margin: 3px 0 17px;
  border: 1px solid #8e939a;
}
.tabsel i { width: 13px; height: 13px; border: 1px solid #8e939a; background: #fff; display: grid; place-items: center; }
.tabsel i::before { content: ""; width: 5px; height: 5px; border: solid #444; border-width: 0 0 2px 2px; }

.vruler {
  position: relative;
  display: flex;
  flex: 1;
  flex-direction: column;
  min-height: 0;
  width: 13px;
  margin-left: 4px;
  padding-top: 13px;
  overflow: hidden;
  border: solid #80858d;
  border-width: 1px 1px 0;
  background: linear-gradient(#cfd2d7 78px, #80858d 78px, #80858d 79px, #f7f9fb 79px);
}
.vruler span {
  display: flex;
  flex: none;
  align-items: center;
  justify-content: center;
  width: 41px;
  height: 11px;
  margin: 15px -15px;
  transform: rotate(-90deg);
  color: #444;
  font-size: 10px;
  line-height: 11px;
}
.vruler span:nth-child(even) { margin-bottom: 16px; }
.vruler span::before, .vruler span::after { content: ""; position: absolute; width: 1px; height: 5px; background: #555; }
.vruler span::before { left: 10px; }
.vruler span::after { right: 10px; }
.band { position: absolute; left: 0; width: 11px; height: 9px; border: solid #80858d; border-width: 1px 0; background: #cfcfd3; }
.b1 { top: 263px; }
.b2 { top: 306px; }
.b3 { top: 348px; }
.b4 { top: 431px; }
.b5 { top: 473px; }
.b6 { top: 513px; }

.canvas { flex: 1; display: flex; flex-direction: column; align-items: center; overflow: hidden; padding: 8px 2px 0 0; }

.hruler {
  position: relative;
  flex: none;
  display: flex;
  width: 796px;
  height: 12px;
  margin-bottom: 23px;
  padding-left: 6px;
  border: 1px solid #80858d;
  background: linear-gradient(to right, #cdd1d7 75px, #f7f9fb 75px, #f7f9fb 719px, #80858d 719px, #cdd1d7 720px);
}
.hruler span { position: relative; width: 28px; color: #444; font-size: 9px; line-height: 10px; text-align: center; }
.hruler .t::after { content: ""; position: absolute; left: 13px; top: 13px; width: 1px; height: 3px; background: #444; }
.gm { position: absolute; top: 1px; }
.m1 { left: 67px; }
.m2 { left: 391px; top: 0; }
.m3 { left: 722px; }
.indent { position: absolute; left: 71px; top: -4px; }

.page {
  position: relative;
  flex: none;
  width: 794px;
  min-height: 1123px;
  padding: 75px 76px;
  background: #fff;
  color: #000;
  font-size: 19px;
  line-height: 42px;
  box-shadow: 0 0 8px 2px #80848a;
}
.page p, .page h2, .page h3, .page ol { margin: 0; font-size: 19px; white-space: nowrap; }
.page .title { height: 68px; font-size: 32px; line-height: 68px; }
.page .sub { height: 37px; color: #b00a0a; font-size: 21px; line-height: 34px; }
.page .sum { color: #0a0ab8; }
.page ol { padding: 0; counter-reset: n; list-style: none; }
.page li { counter-increment: n; }
.page li::before { content: counter(n) "."; display: inline-block; width: 24px; }
.pm { display: inline-block; width: 9px; height: 9px; vertical-align: -1px; }

.crop { position: absolute; top: 52px; width: 24px; height: 24px; border-bottom: 1px solid #aaa; }
.cl { left: 52px; border-right: 1px solid #aaa; }
.cr { right: 52px; border-left: 1px solid #aaa; }

.tablebox { position: relative; margin-left: -8px; width: 676px; }
.handle { position: absolute; left: -13px; top: -14px; }
.corner { position: absolute; right: 13px; bottom: -6px; width: 5px; height: 5px; border: 1px solid #999; background: #fff; }
table { width: 100%; table-layout: fixed; border-collapse: collapse; }
tr { height: 42px; }
tr.tall { height: 84px; }
td { padding: 0 7px; border: 1px solid #000; line-height: 41px; white-space: nowrap; }
td.end { width: 18px; padding: 6px 0 0; border: 0; line-height: 8px; vertical-align: top; }
td.end .pm { display: block; }
.gap { display: inline-block; width: 21px; }
.wavy { text-decoration: underline wavy #3aa64a 1px; text-underline-offset: 4px; }
.in2 { padding-left: 38px; }
.in3 { padding-left: 47px; }
.caret { position: relative; }
.caret svg { position: absolute; left: 2px; top: 7px; }

/* Scroll bar */
.scroll { width: 17px; flex: none; display: flex; flex-direction: column; align-items: center; padding-top: 5px; background: #dfe4ea; }
.splitter { width: 9px; height: 2px; margin-bottom: 2px; background: #777; }
.rt { display: grid; place-items: center; width: 16px; height: 17px; border: 1px solid #8e939a; flex: none; }
.sa { display: grid; place-items: center; height: 17px; width: 17px; flex: none; }
.sa:nth-of-type(3) { border-bottom: 1px solid #b9bec6; }
.tri { width: 9px; height: 5px; background: #444; clip-path: polygon(50% 0, 100% 100%, 0 100%); }
.dn { transform: scaleY(-1); }
.track { flex: 1; align-self: stretch; min-height: 0; }
.thumb {
  display: grid;
  place-items: center;
  height: 72%;
  margin-right: 2px;
  border: 1px solid #8e959f;
  background: linear-gradient(to right, #fff, #e6e9ee);
}
.thumb i { width: 8px; height: 7px; background: repeating-linear-gradient(#777 0 1px, #fff 1px 2px); }
.nav { display: grid; place-items: center; height: 17px; width: 17px; flex: none; }

/* Status bar */
.status {
  display: flex;
  align-items: center;
  height: 23px;
  flex: none;
  padding-left: 7px;
  border-top: 1px solid #8f949b;
  border-bottom: 1px solid #5a8fb5;
  background: linear-gradient(#f2f3f5, #c9cdd3);
  color: #444;
}
.st { display: flex; align-items: center; height: 18px; padding-right: 10px; margin-right: 9px; border-right: 1px solid #999fa8; }
.proof { gap: 16px; }
.macro { gap: 16px; }
.views { display: flex; align-items: center; flex: 1; justify-content: end; }
.v { display: grid; place-items: center; width: 18px; height: 19px; }
.v.hot { width: 20px; }
.pct { margin: 0 8px 0 9px; }
.round { display: grid; place-items: center; width: 16px; height: 16px; border: 1px solid #777; border-radius: 50%; background: #fff; }
.views input { width: 100px; height: 16px; margin: 0; appearance: none; background: linear-gradient(#0000 7px, #999 7px, #999 8px, #0000 8px); }
.views input::-webkit-slider-thumb { appearance: none; width: 9px; height: 13px; border: 1px solid #666; border-radius: 1px 1px 5px 5px; background: #fff; }
.grip { margin: 6px 1px 0 6px; }

/* Taskbar */
.taskbar { display: flex; background: #0f0f0f; color: #fff; }
.pin { display: grid; place-items: center; width: 38px; padding-top: 2px; }
.pin.first { width: 15px; margin-left: -6px; margin-right: 6px; }
.task {
  display: flex;
  align-items: center;
  gap: 4px;
  width: 152px;
  margin-left: 3px;
  margin-right: 6px;
  padding: 3px 3px 0 5px;
  border-bottom: 2px solid #6fa8d8;
  white-space: nowrap;
}
.task span { flex: 1; overflow: hidden; text-align: left; }
.task.browser { padding: 3px 0 0 3px; gap: 2px; }
.task.active { width: 160px; padding-left: 8px; gap: 5px; margin-left: -1px; background: #333; }
.tray { display: flex; margin-left: auto; padding: 2px 1px 0 0; }
.tray button { display: grid; place-items: center; width: 24px; }
.ime { font-size: 13px; font-weight: 500; }
```
